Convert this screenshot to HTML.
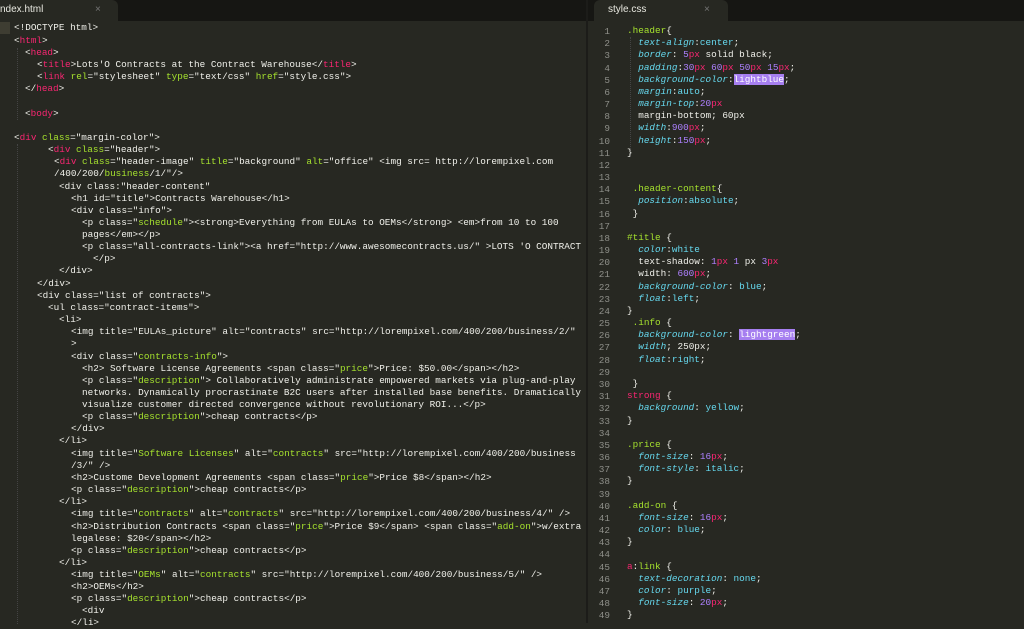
<!DOCTYPE html>
<html><head><meta charset="utf-8"><style>
body{margin:0;width:1024px;height:623px;overflow:hidden;background:#272822;font-family:"Liberation Mono",monospace;font-size:9.35px;color:#f0f0ea;position:relative}
.tb{position:absolute;left:0;top:0;width:1024px;height:21px;background:#161613}
.tab{position:absolute;top:0;height:21px;background:#272822;color:#e8e8e0;font-family:"Liberation Sans",sans-serif;font-size:10px;line-height:20px}
.tab .x{position:absolute;color:#777;font-size:10px}
.div{position:absolute;left:586px;top:0;width:2px;height:623px;background:#1c1c19}
.l{position:absolute;white-space:pre;line-height:12px}
.t{color:#f92672}.a{color:#a6e22e}.s{color:#e6db74}.p{color:#66d9ef;font-style:italic}.v{color:#66d9ef}.n{color:#ae81ff}.u{color:#f92672}
.h{background:#a67ff0;color:#fff}
.ln{position:absolute;left:588px;width:22px;text-align:right;color:#8f908a;line-height:12.17px}
.cur{position:absolute;left:0;top:22px;width:10px;height:12px;background:#3e3d32}
.g{position:absolute;width:0;border-left:1px dotted #444}
</style></head><body>
<div class="tb"></div>
<div class="tab" style="left:0;width:118px;border-radius:0 6px 0 0"><span style="position:absolute;left:0">ndex.html</span><span class="x" style="left:95px">×</span></div>
<div class="tab" style="left:594px;width:134px;border-radius:6px 6px 0 0"><span style="position:absolute;left:14px">style.css</span><span class="x" style="left:110px">×</span></div>
<div class="div"></div>
<div class="cur"></div>
<div class="g" style="left:17px;top:48px;height:72px"></div>
<div class="g" style="left:17px;top:144px;height:480px"></div>
<div class="g" style="left:630px;top:37px;height:120px"></div>

<div class="l" style="left:14px;top:22px">&lt;!DOCTYPE html&gt;</div>
<div class="l" style="left:14px;top:35px">&lt;<span class="t">html</span>&gt;</div>
<div class="l" style="left:25px;top:47px">&lt;<span class="t">head</span>&gt;</div>
<div class="l" style="left:37px;top:59px">&lt;<span class="t">title</span>&gt;Lots'O Contracts at the Contract Warehouse&lt;/<span class="t">title</span>&gt;</div>
<div class="l" style="left:37px;top:71px">&lt;<span class="t">link</span> <span class="a">rel</span>="stylesheet" <span class="a">type</span>="text/css" <span class="a">href</span>="style.css"&gt;</div>
<div class="l" style="left:25px;top:83px">&lt;/<span class="t">head</span>&gt;</div>
<div class="l" style="left:25px;top:108px">&lt;<span class="t">body</span>&gt;</div>
<div class="l" style="left:14px;top:132px">&lt;<span class="t">div</span> <span class="a">class</span>="margin-color"&gt;</div>
<div class="l" style="left:48px;top:144px">&lt;<span class="t">div</span> <span class="a">class</span>="header"&gt;</div>
<div class="l" style="left:54px;top:156px">&lt;<span class="t">div</span> <span class="a">class</span>="header-image" <span class="a">title</span>="background" <span class="a">alt</span>="office" &lt;img src= http://lorempixel.com</div>
<div class="l" style="left:54px;top:168px">/400/200/<span class="a">business</span>/1/"/&gt;</div>
<div class="l" style="left:59px;top:181px">&lt;div class:"header-content"</div>
<div class="l" style="left:71px;top:193px">&lt;h1 id="title"&gt;Contracts Warehouse&lt;/h1&gt;</div>
<div class="l" style="left:71px;top:205px">&lt;div class="info"&gt;</div>
<div class="l" style="left:82px;top:217px">&lt;p class="<span class="a">schedule</span>"&gt;&lt;strong&gt;Everything from EULAs to OEMs&lt;/strong&gt; &lt;em&gt;from 10 to 100</div>
<div class="l" style="left:82px;top:229px">pages&lt;/em&gt;&lt;/p&gt;</div>
<div class="l" style="left:82px;top:241px">&lt;p class="all-contracts-link"&gt;&lt;a href="http://www.awesomecontracts.us/" &gt;LOTS 'O CONTRACT</div>
<div class="l" style="left:93px;top:253px">&lt;/p&gt;</div>
<div class="l" style="left:59px;top:265px">&lt;/div&gt;</div>
<div class="l" style="left:37px;top:278px">&lt;/div&gt;</div>
<div class="l" style="left:37px;top:290px">&lt;div class="list of contracts"&gt;</div>
<div class="l" style="left:48px;top:302px">&lt;ul class="contract-items"&gt;</div>
<div class="l" style="left:59px;top:314px">&lt;li&gt;</div>
<div class="l" style="left:71px;top:326px">&lt;img title="EULAs_picture" alt="contracts" src="http://lorempixel.com/400/200/business/2/"</div>
<div class="l" style="left:71px;top:338px">&gt;</div>
<div class="l" style="left:71px;top:351px">&lt;div class="<span class="a">contracts-info</span>"&gt;</div>
<div class="l" style="left:82px;top:363px">&lt;h2&gt; Software License Agreements &lt;span class="<span class="a">price</span>"&gt;Price: $50.00&lt;/span&gt;&lt;/h2&gt;</div>
<div class="l" style="left:82px;top:375px">&lt;p class="<span class="a">description</span>"&gt; Collaboratively administrate empowered markets via plug-and-play</div>
<div class="l" style="left:82px;top:387px">networks. Dynamically procrastinate B2C users after installed base benefits. Dramatically</div>
<div class="l" style="left:82px;top:399px">visualize customer directed convergence without revolutionary ROI...&lt;/p&gt;</div>
<div class="l" style="left:82px;top:411px">&lt;p class="<span class="a">description</span>"&gt;cheap contracts&lt;/p&gt;</div>
<div class="l" style="left:71px;top:423px">&lt;/div&gt;</div>
<div class="l" style="left:59px;top:435px">&lt;/li&gt;</div>
<div class="l" style="left:71px;top:448px">&lt;img title="<span class="a">Software Licenses</span>" alt="<span class="a">contracts</span>" src="http://lorempixel.com/400/200/business</div>
<div class="l" style="left:71px;top:460px">/3/" /&gt;</div>
<div class="l" style="left:71px;top:472px">&lt;h2&gt;Custome Development Agreements &lt;span class="<span class="a">price</span>"&gt;Price $8&lt;/span&gt;&lt;/h2&gt;</div>
<div class="l" style="left:71px;top:484px">&lt;p class="<span class="a">description</span>"&gt;cheap contracts&lt;/p&gt;</div>
<div class="l" style="left:59px;top:496px">&lt;/li&gt;</div>
<div class="l" style="left:71px;top:508px">&lt;img title="<span class="a">contracts</span>" alt="<span class="a">contracts</span>" src="http://lorempixel.com/400/200/business/4/" /&gt;</div>
<div class="l" style="left:71px;top:521px">&lt;h2&gt;Distribution Contracts &lt;span class="<span class="a">price</span>"&gt;Price $9&lt;/span&gt; &lt;span class="<span class="a">add-on</span>"&gt;w/extra</div>
<div class="l" style="left:71px;top:533px">legalese: $20&lt;/span&gt;&lt;/h2&gt;</div>
<div class="l" style="left:71px;top:545px">&lt;p class="<span class="a">description</span>"&gt;cheap contracts&lt;/p&gt;</div>
<div class="l" style="left:59px;top:557px">&lt;/li&gt;</div>
<div class="l" style="left:71px;top:569px">&lt;img title="<span class="a">OEMs</span>" alt="<span class="a">contracts</span>" src="http://lorempixel.com/400/200/business/5/" /&gt;</div>
<div class="l" style="left:71px;top:581px">&lt;h2&gt;OEMs&lt;/h2&gt;</div>
<div class="l" style="left:71px;top:593px">&lt;p class="<span class="a">description</span>"&gt;cheap contracts&lt;/p&gt;</div>
<div class="l" style="left:82px;top:605px">&lt;div</div>
<div class="l" style="left:71px;top:617px">&lt;/li&gt;</div>

<div class="ln" style="top:26px">1<br>2<br>3<br>4<br>5<br>6<br>7<br>8<br>9<br>10<br>11<br>12<br>13<br>14<br>15<br>16<br>17<br>18<br>19<br>20<br>21<br>22<br>23<br>24<br>25<br>26<br>27<br>28<br>29<br>30<br>31<br>32<br>33<br>34<br>35<br>36<br>37<br>38<br>39<br>40<br>41<br>42<br>43<br>44<br>45<br>46<br>47<br>48<br>49</div>
<div class="l" style="left:627px;top:25px;line-height:12.17px"><span class="a">.header</span>{
  <span class="p">text-align</span>:<span class="v">center</span>;
  <span class="p">border</span>: <span class="n">5</span><span class="u">px</span> solid black;
  <span class="p">padding</span>:<span class="n">30</span><span class="u">px</span> <span class="n">60</span><span class="u">px</span> <span class="n">50</span><span class="u">px</span> <span class="n">15</span><span class="u">px</span>;
  <span class="p">background-color</span>:<span class="h">lightblue</span>;
  <span class="p">margin</span>:<span class="v">auto</span>;
  <span class="p">margin-top</span>:<span class="n">20</span><span class="u">px</span>
  margin-bottom; 60px
  <span class="p">width</span>:<span class="n">900</span><span class="u">px</span>;
  <span class="p">height</span>:<span class="n">150</span><span class="u">px</span>;
}


 <span class="a">.header-content</span>{
  <span class="p">position</span>:<span class="v">absolute</span>;
 }

<span class="a">#title</span> {
  <span class="p">color</span>:<span class="v">white</span>
  text-shadow: <span class="n">1</span><span class="u">px</span> <span class="n">1</span> px <span class="n">3</span><span class="u">px</span>
  width: <span class="n">600</span><span class="u">px</span>;
  <span class="p">background-color</span>: <span class="v">blue</span>;
  <span class="p">float</span>:<span class="v">left</span>;
}
 <span class="a">.info</span> {
  <span class="p">background-color</span>: <span class="h">lightgreen</span>;
  <span class="p">width</span>; 250px;
  <span class="p">float</span>:<span class="v">right</span>;

 }
<span class="t">strong</span> {
  <span class="p">background</span>: <span class="v">yellow</span>;
}

<span class="a">.price</span> {
  <span class="p">font-size</span>: <span class="n">16</span><span class="u">px</span>;
  <span class="p">font-style</span>: <span class="v">italic</span>;
}

<span class="a">.add-on</span> {
  <span class="p">font-size</span>: <span class="n">16</span><span class="u">px</span>;
  <span class="p">color</span>: <span class="v">blue</span>;
}

<span class="t">a</span>:<span class="a">link</span> {
  <span class="p">text-decoration</span>: <span class="v">none</span>;
  <span class="p">color</span>: <span class="v">purple</span>;
  <span class="p">font-size</span>: <span class="n">20</span><span class="u">px</span>;
}</div>
</body></html>
